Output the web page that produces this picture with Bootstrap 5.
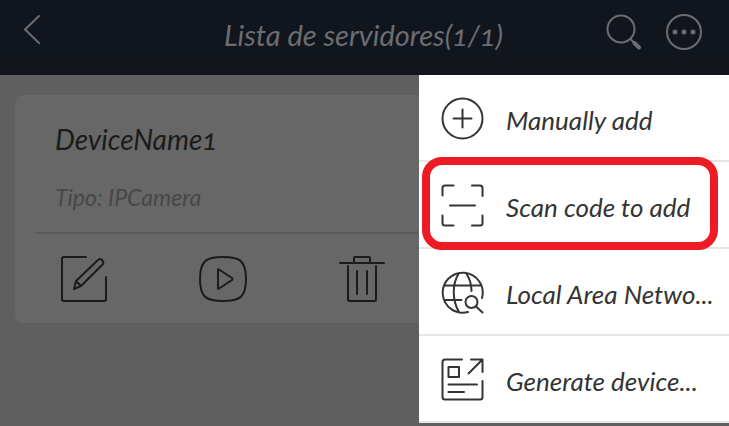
<!DOCTYPE html>
<html lang="es">
<head>
<meta charset="utf-8">
<meta name="viewport" content="width=device-width, initial-scale=1">
<title>Lista de servidores</title>
<link rel="stylesheet" href="https://cdn.jsdelivr.net/npm/bootstrap@5.3.0/dist/css/bootstrap.min.css">
<style>
  body { font-family: Lato, "Open Sans", sans-serif; font-style: italic; font-variant-numeric: oldstyle-nums; background: #5f5f5f; color: #1b1b1b; }
  svg { display: block; fill: none; stroke: currentColor; stroke-width: 2; stroke-linecap: round; stroke-linejoin: round; }
  .app-shell { min-height: 100vh; overflow: hidden; }
  .top-bar { height: 75px; padding: 0 26px 12px 24px; background: linear-gradient(#11151e 65%, #12161a); color: #6c6d70; }
  .top-side { flex: 1 1 0; }
  .top-tools { gap: 22px; }
  .top-title { font-size: 29px; line-height: 32px; padding-top: 6px; }
  .icon-button { padding: 0; border: 0; background: none; color: inherit; }
  .device-card { margin: 20px 15px 0; padding: 0 20px; border-radius: 8px; background: #676767; }
  .device-info { padding: 28px 20px 20px; border-bottom: 2px solid #5c5c5c; }
  .device-name { font-size: 28px; line-height: 32px; }
  .device-type { font-size: 23px; line-height: 30px; margin-top: 27px; color: #474747; }
  .device-actions { padding: 0 26px; gap: 89px; height: 89px; }
  .action-menu { position: absolute; top: 75px; right: 0; width: 310px; background: #fff; color: #343434; }
  .menu-row { height: 87px; padding: 2px 16px 0 22px; gap: 22px; border: 0; border-bottom: 2px solid #e6e6e6; background: none; color: inherit; font-style: italic; font-size: 26px; line-height: 32px; }
  .menu-label { padding-top: 2px; }
  .highlight-ring { position: absolute; top: 82px; left: 3px; right: 11px; height: 93px; border: 8px solid #ed1c24; border-radius: 20px; pointer-events: none; }
</style>
</head>
<body>
<div class="app-shell position-relative">
  <header class="top-bar d-flex align-items-center">
    <div class="top-side">
      <button class="icon-button" type="button" aria-label="Volver">
        <svg width="18" height="30" viewBox="0 0 18 30"><path d="M15 2 1 15.500 15 29"/></svg>
      </button>
    </div>
    <h1 class="top-title mb-0 fw-normal text-nowrap">Lista de servidores(1/1)</h1>
    <div class="top-side top-tools d-flex justify-content-end">
      <button class="icon-button" type="button" aria-label="Buscar">
        <svg width="38" height="38" viewBox="0 0 38 38"><circle cx="16" cy="16" r="13.500"/><path d="m25.500 26 3 3"/><path stroke-width="4" d="m29.500 30 4.500 4.500"/></svg>
      </button>
      <button class="icon-button" type="button" aria-label="Opciones">
        <svg width="38" height="38" viewBox="0 0 38 38"><circle cx="19" cy="19" r="17"/><g fill="currentColor" stroke="none"><circle cx="10" cy="19" r="2.500"/><circle cx="19" cy="19" r="2.500"/><circle cx="28" cy="19" r="2.500"/></g></svg>
      </button>
    </div>
  </header>
  <main>
    <section class="device-card">
      <div class="device-info">
        <h2 class="device-name mb-0 fw-normal">DeviceName1</h2>
        <p class="device-type mb-0">Tipo: IPCamera</p>
      </div>
      <div class="device-actions d-flex align-items-center">
        <button class="icon-button" type="button" aria-label="Editar">
          <svg width="48" height="48" viewBox="2 0 48 48"><path d="M27 2H5a2 2 0 0 0-2 2v40a2 2 0 0 0 2 2h40a2 2 0 0 0 2-2V22M15 34l2-8L39 5q2-2 4 0t1 4L22 31Zm2-8 5 5"/></svg>
        </button>
        <button class="icon-button" type="button" aria-label="Reproducir">
          <svg width="50" height="48" viewBox="0 0 50 48"><path d="M25 2C41 2 48 5 48 24S41 46 25 46 2 43 2 24 9 2 25 2ZM20 15v18q0 1 1 .500L34 25q1-1 0-2L21 14.500q-1-.500-1 .500Z"/></svg>
        </button>
        <button class="icon-button" type="button" aria-label="Eliminar">
          <svg width="50" height="48" viewBox="0 0 50 48"><path d="M3 8h44M17 8V3q0-1 1-1h14q1 0 1 1v5M11 11v33q0 2 2 2h24q2 0 2-2V11M20 16v23M30 16v23"/></svg>
        </button>
      </div>
    </section>
  </main>
  <nav class="action-menu" aria-label="Opciones">
    <button class="menu-row d-flex align-items-center w-100 text-start" type="button">
      <svg class="flex-shrink-0" width="43" height="43" viewBox="0 0 43 43"><circle cx="21.500" cy="21.500" r="20"/><path d="M21.500 12.500v18M12.500 21.500h18"/></svg>
      <span class="menu-label text-nowrap">Manually add</span>
    </button>
    <button class="menu-row d-flex align-items-center w-100 text-start" type="button">
      <svg class="flex-shrink-0" width="43" height="43" viewBox="0 0 43 43"><path d="M1.500 11.500V4q0-2.500 2.500-2.500h8.500M31 1.500h8q2.500 0 2.500 2.500v8M1.500 31.500V39q0 2.500 2.500 2.500h8.500M31 41.500h8q2.500 0 2.500-2.500v-7.500M9 21.500h25"/></svg>
      <span class="menu-label text-nowrap">Scan code to add</span>
    </button>
    <button class="menu-row d-flex align-items-center w-100 text-start" type="button">
      <svg class="flex-shrink-0" width="43" height="43" viewBox="0 0 43 43"><path d="M41 27A20 20 0 1 0 27 41M3.500 14.500h36M3.500 29h17M18 2C11 13 11 29 18 41M25 2q5.500 8 5.500 18"/><circle cx="30.500" cy="31" r="6"/><path d="m35 35.500 6.500 6"/></svg>
      <span class="menu-label text-nowrap">Local Area Netwo...</span>
    </button>
    <button class="menu-row d-flex align-items-center w-100 text-start" type="button">
      <svg class="flex-shrink-0" width="43" height="43" viewBox="0 0 43 43"><path d="M21 1.500H4Q1.500 1.500 1.500 4v35q0 2.500 2.500 2.500h35q2.500 0 2.500-2.500V23M30 1.500h11.500V14M41 2 27.500 15.500M7.500 9H18v10H7.500ZM7.500 26.500H36M7.500 34H23"/></svg>
      <span class="menu-label text-nowrap">Generate device...</span>
    </button>
    <div class="highlight-ring"></div>
  </nav>
</div>
<script src="https://cdn.jsdelivr.net/npm/bootstrap@5.3.0/dist/js/bootstrap.bundle.min.js"></script>
</body>
</html>
